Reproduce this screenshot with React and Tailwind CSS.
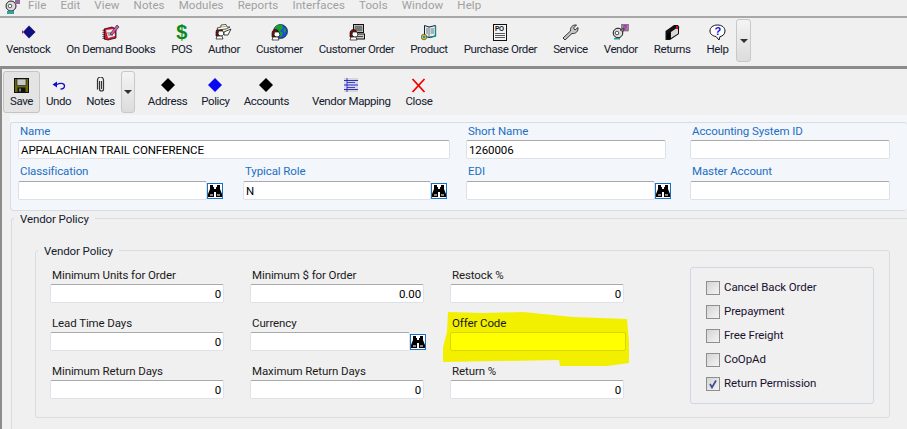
import React from "react";

const Diamond = ({ color }) => (
  <svg width="16" height="16" viewBox="0 0 16 16">
    <path d="M8 1 L15 8 L8 15 L1 8 Z" fill={color} />
  </svg>
);

// little cartoon person used by several of the old toolbar bitmaps
const Person = ({ x = 0, y = 0 }) => (
  <g transform={`translate(${x} ${y})`}>
    <path d="M1 4 A3.5 3.5 0 0 1 7 1.5 L8 6 L5 9 L1 8 Z" fill="#7a1010" stroke="#111" strokeWidth="0.7" />
    <path d="M3.5 3 L8 3 L9 6 L7 8 L5 8 L3 6 Z" fill="#fff" stroke="#111" strokeWidth="0.7" />
    <path d="M2 8 H7 L8 11 H1 Z" fill="#fff" stroke="#111" strokeWidth="0.7" />
  </g>
);

const icons = {
  venstock: (
    <svg width="16" height="16" viewBox="0 0 16 16">
      <path d="M9 1.5 L15.5 8 L9 14.5 L3 8 Z" fill="#10107e" />
      <path d="M2 6 L4 8 L2 10 Z" fill="#d81870" />
    </svg>
  ),
  books: (
    <svg width="18" height="17" viewBox="0 0 18 17">
      <path d="M2 5 L10 3 L14 5 L14 14 L6 16 L2 15 Z" fill="#e01030" stroke="#111" strokeWidth="0.8" />
      <path d="M4 6 L12 5 L13 12 L6 14 Z" fill="#f0f0f0" />
      <path d="M5 9 H10 M6 11 H11" stroke="#444" strokeWidth="0.8" />
      <path d="M8 10 L15 1 L17 3 L10 11 Z" fill="#d858b0" stroke="#111" strokeWidth="0.6" />
      <path d="M1 6 V15 M2.5 6 V15" stroke="#111" strokeWidth="0.8" strokeDasharray="1 1" />
    </svg>
  ),
  pos: <div className="h-[18px] font-['Liberation_Sans'] text-[20px] leading-[18px] font-bold text-[#0a8a1a]">$</div>,
  author: (
    <svg width="17" height="16" viewBox="0 0 17 16">
      <Person x={0} y={4} />
      <path d="M2 4 L6 3 L6 1 L11 0.5 L12 3 L15 3 L11 5 L3 6 Z" fill="#fff" stroke="#111" strokeWidth="0.7" />
      <path d="M6 3 L11.5 2.5" stroke="#c8b020" strokeWidth="1" />
      <path d="M9 8 L16 5 L13 11 L9 11 Z" fill="#fff" stroke="#111" strokeWidth="0.8" />
    </svg>
  ),
  customer: (
    <svg width="17" height="17" viewBox="0 0 17 17">
      <circle cx="9.5" cy="7.5" r="7" fill="#1850d8" stroke="#111" strokeWidth="0.7" />
      <path d="M4 3 C6 1 9 0.5 11 1 L12 4 L9 7 L12 9 L10 13 L7 11 L3.5 7 Z" fill="#18a030" />
      <path d="M13 4 L15 6 L14 9 L12.5 7 Z" fill="#18a030" />
      <Person x={0} y={5} />
    </svg>
  ),
  order: (
    <svg width="16" height="17" viewBox="0 0 16 17">
      <rect x="4.5" y="0.5" width="10" height="8" fill="#eee" stroke="#111" />
      <rect x="5.5" y="1.5" width="8" height="6" fill="#777" />
      <rect x="6" y="10" width="9.5" height="5" fill="#ccc" stroke="#111" />
      <path d="M8 12.5 H14" stroke="#444" />
      <Person x={0} y={5} />
    </svg>
  ),
  product: (
    <svg width="16" height="17" viewBox="0 0 16 17">
      <path d="M3.5 1.5 L8 3 L14.5 1.5 V12 L8 13.5 L3.5 12 Z" fill="#e8eef0" stroke="#123" />
      <path d="M8 3 V13.5 M5 5 H7 M5 7 H7 M5 9 H7 M9.5 5 H13 M9.5 7 H13 M9.5 9 H13" stroke="#345" strokeWidth="0.7" />
      <path d="M14.5 2 V12 L9 13.5" fill="none" stroke="#128a8a" strokeWidth="1.4" />
      <circle cx="3" cy="13" r="2.8" fill="#c8c030" stroke="#222" strokeWidth="0.5" />
      <path d="M2 12 H4 V14 H2 Z" fill="#2090c8" />
    </svg>
  ),
  purchase: (
    <svg width="14" height="17" viewBox="0 0 14 17">
      <rect x="0.5" y="0.5" width="13" height="16" fill="#f4f4f4" stroke="#111" />
      <text x="2" y="7" fontSize="6.5" fontWeight="700" fontFamily="Liberation Sans" fill="#111">PO</text>
      <path d="M2 9.5 H12 M2 11.5 H12 M2 13.5 H12" stroke="#333" strokeWidth="0.8" />
    </svg>
  ),
  service: (
    <svg width="17" height="17" viewBox="0 0 17 17">
      <path d="M1 14 L8.5 7 C8 3.5 10.5 0.5 14.5 1 L11.5 4 L13 6 L16 3.5 C16.5 7.5 13.5 10 10 9.5 L3 16 Z" fill="#c4c4c4" stroke="#222" strokeWidth="0.9" />
    </svg>
  ),
  vendor: (
    <svg width="17" height="16" viewBox="0 0 17 16">
      <rect x="9.5" y="0" width="7" height="7" fill="#9a7aa0" stroke="#666" strokeWidth="0.6" />
      <text x="11" y="6" fontSize="6.5" fontWeight="700" fontFamily="Liberation Sans" fill="#c000c0">?</text>
      <circle cx="6" cy="9" r="4.8" fill="#ddd" stroke="#111" />
      <circle cx="5" cy="9" r="1.8" fill="#fff" stroke="#111" strokeWidth="0.7" />
      <path d="M8 6 L12 4 L11 8 Z" fill="#888" stroke="#111" strokeWidth="0.5" />
      <path d="M2 14 H8 V15.5 H2 Z" fill="#30a0a0" />
    </svg>
  ),
  returns: (
    <svg width="15" height="16" viewBox="0 0 15 16">
      <path d="M0.5 7 L9 1 L13 1 Q15 3 14 5 L14 10 L5 16 L0.5 16 Z" fill="#111" />
      <path d="M6 8 L11 4.5 Q13 4 13 6 L13 9.5 L6 14 Z" fill="#d8d8d8" />
      <rect x="11" y="2" width="2" height="3" fill="#d01020" />
      <path d="M2 10 Q4 8 5 9 L5 15 L2 15 Z" fill="#000" />
    </svg>
  ),
  help: (
    <svg width="17" height="17" viewBox="0 0 17 17">
      <path d="M8.5 1 C13 1 16 3.5 16 7 C16 10.5 13 12.5 11 12.5 L10 16 L7 12.5 C4 12 1 10.5 1 7 C1 3.5 4 1 8.5 1 Z" fill="#fff" stroke="#111" />
      <text x="5.5" y="11" fontSize="11" fontWeight="700" fontFamily="Liberation Sans" fill="#1010e0">?</text>
    </svg>
  ),
  save: (
    <svg width="15" height="15" viewBox="0 0 15 15">
      <rect x="0.5" y="0.5" width="14" height="14" fill="#68680c" stroke="#111" />
      <rect x="3" y="1" width="9" height="6.5" fill="#c8c8c8" stroke="#111" strokeWidth="0.6" />
      <rect x="3.5" y="9.5" width="8" height="5" fill="#111" />
      <rect x="5" y="10.5" width="2" height="3" fill="#777" />
    </svg>
  ),
  undo: (
    <svg width="14" height="9" viewBox="0 0 14 9">
      <path d="M0.5 3.5 L5 0.5 L5 6.5 Z" fill="#1010c8" />
      <path d="M5 3.5 C8 1.5 12.5 2 12.5 5 C12.5 7 10.5 8 8.5 8" fill="none" stroke="#1010c8" strokeWidth="1.3" />
    </svg>
  ),
  notes: (
    <svg width="10" height="16" viewBox="0 0 10 16">
      <path d="M3.5 4 V12 A2 2 0 0 0 7.5 12 V3 A2.5 2.5 0 0 0 1.5 3 V12.5 M5.5 4 V12" fill="none" stroke="#333" strokeWidth="1.2" />
    </svg>
  ),
  mapping: (
    <svg width="16" height="16" viewBox="0 0 16 16">
      <rect x="1" y="1" width="14" height="14" fill="#d8d8d8" />
      <path d="M1 3.5 H15 M1 8 H15 M1 12.5 H15" stroke="#1a1ad0" strokeWidth="0.9" />
      <path d="M4 1 V15 M4 5.5 H12 M4 10.5 H12" stroke="#1a1ad0" strokeWidth="0.8" />
    </svg>
  ),
  close: (
    <svg width="15" height="15" viewBox="0 0 15 15">
      <path d="M1.5 1 L13.5 14 M13.5 1 L1.5 14" stroke="#f00000" strokeWidth="1.8" />
    </svg>
  ),
};

function ToolButton({ icon, label, tight, className = "" }) {
  return (
    <div className={"flex flex-col items-center whitespace-nowrap tracking-[-0.4px] " + className}>
      <div className="flex h-[18px] items-center justify-center">{icon}</div>
      <div className={tight ? "leading-[14px]" : "leading-[17px]"}>{label}</div>
    </div>
  );
}

function Caret({ className = "" }) {
  return (
    <div className={"flex items-center justify-center rounded-[3px] border border-[#c8c8c8] bg-gradient-to-b from-[#f4f4f4] to-[#dcdcdc] " + className}>
      <div className="h-0 w-0 border-x-[4px] border-t-[4px] border-x-transparent border-t-[#333]" />
    </div>
  );
}

function Binoculars() {
  return (
    <div className="flex h-[16px] w-[16px] shrink-0 items-center justify-center border border-[#1c6fc4] bg-white">
      <svg width="14" height="13" viewBox="0 0 14 13">
        <path d="M2 1 H5 V3 H6 V5 H8 V3 H9 V1 H12 V5 L14 10 V13 H8 V8 H6 V13 H0 V10 L2 5 Z" fill="#000" />
        <path d="M2 10 H5 V12 H2 Z M9 10 H12 V12 H9 Z" fill="#888" />
      </svg>
    </div>
  );
}

function Box({ value, right, className = "" }) {
  return (
    <div
      className={
        "h-[19px] truncate rounded-[2px] border border-[#dde2e8] border-t-[#a9a9a9] bg-white px-[2px] leading-[18px] text-black " +
        (right ? "text-right " : "") +
        className
      }
    >
      {value || "\u00a0"}
    </div>
  );
}

function HeadField({ label, value, search, tall, className = "" }) {
  return (
    <div className={className}>
      <div className={"ml-[2px] leading-[18px] text-[#1c6fc4] " + (tall ? "h-[19px]" : "h-[18px]")}>{label}</div>
      <div className="flex items-center">
        <Box value={value} className="min-w-0 flex-1" />
        {search && <Binoculars />}
      </div>
    </div>
  );
}

function PolicyField({ label, value, search, className = "" }) {
  return (
    <div className={className}>
      <div className="ml-[2px] h-[18px] leading-[18px] text-[#1a1a1a]">{label}</div>
      <div className="flex items-center">
        <Box value={value} right className="min-w-0 flex-1" />
        {search && <Binoculars />}
      </div>
    </div>
  );
}

function Check({ label, checked }) {
  return (
    <div className="flex h-[24px] items-center gap-[4px] text-[#1a1030]">
      <div className="flex h-[14px] w-[14px] items-center justify-center border border-[#8e8e8e] bg-gradient-to-br from-[#d4d4d4] to-[#f4f4f4]">
        {checked && (
          <svg width="10" height="10" viewBox="0 0 10 10">
            <path d="M2 5 L4 8.5 L8 1.5" fill="none" stroke="#3a4f8f" strokeWidth="1.7" />
          </svg>
        )}
      </div>
      {label}
    </div>
  );
}

const menus = ["File", "Edit", "View", "Notes", "Modules", "Reports", "Interfaces", "Tools", "Window", "Help"];

const topTools = [
  ["venstock", "Venstock"],
  ["books", "On Demand Books"],
  ["pos", "POS"],
  ["author", "Author"],
  ["customer", "Customer"],
  ["order", "Customer Order"],
  ["product", "Product"],
  ["purchase", "Purchase Order"],
  ["service", "Service"],
  ["vendor", "Vendor"],
  ["returns", "Returns"],
  ["help", "Help"],
];

export default function App() {
  return (
    <div className="relative h-[429px] w-[907px] overflow-hidden bg-[#f0f0f0] font-['Roboto',sans-serif] text-[11.5px] tracking-[-0.1px] text-[#14202e]">
      {/* menu bar, cropped at the top edge */}
      <div className="flex h-[18px] items-end gap-[14px] border-b-2 border-[#a8a8a8] pb-[3px] pl-[28px] text-[11.5px] leading-[15px] tracking-[0.1px] text-[#a0a0a0]">
        <svg className="absolute left-[4px] top-0" width="17" height="14" viewBox="0 0 17 14">
          <circle cx="7" cy="6" r="5" fill="#ddd" stroke="#222" />
          <circle cx="6" cy="6" r="1.8" fill="#fff" stroke="#222" strokeWidth="0.7" />
          <rect x="11" y="0" width="5" height="4" fill="#906a9a" />
          <path d="M3 11 H10 V14 H3 Z" fill="#30a0a0" />
        </svg>
        {menus.map((m) => (
          <span key={m}>{m}</span>
        ))}
      </div>

      {/* main toolbar */}
      <div className="flex h-[51px] items-start gap-[16px] border-b-[3px] border-[#8c8c8c] pl-[6px] pt-[5px]">
        {topTools.map(([key, label]) => (
          <ToolButton key={key} icon={icons[key]} label={label} />
        ))}
        <Caret className="-ml-[8px] -mt-[4px] h-[43px] w-[15px]" />
      </div>

      {/* form toolbar */}
      <div className="flex h-[46px] items-start pl-[3px] pt-[2px]">
        <ToolButton
          tight
          icon={icons.save}
          label="Save"
          className="h-[42px] w-[37px] rounded-[3px] border border-[#c4c4c4] bg-[#e4e4e4] pt-[4px]"
        />
        <ToolButton tight icon={icons.undo} label="Undo" className="ml-[6px] mt-[5px]" />
        <ToolButton tight icon={icons.notes} label="Notes" className="ml-[15px] mt-[5px]" />
        <Caret className="ml-[6px] h-[42px] w-[14px]" />
        <ToolButton tight icon={<Diamond color="#000" />} label="Address" className="ml-[13px] mt-[5px]" />
        <ToolButton tight icon={<Diamond color="#0808f0" />} label="Policy" className="ml-[14px] mt-[5px]" />
        <ToolButton tight icon={<Diamond color="#000" />} label="Accounts" className="ml-[14px] mt-[5px]" />
        <ToolButton tight icon={icons.mapping} label="Vendor Mapping" className="ml-[23px] mt-[5px]" />
        <ToolButton tight icon={icons.close} label="Close" className="ml-[15px] mt-[5px]" />
      </div>

      {/* page frame */}
      <div className="absolute bottom-0 left-0 top-[69px] w-[2px] bg-[#8c8c8c]" />

      {/* vendor header panel */}
      <div className="ml-[10px] bg-[#f4f6fa] pt-[7px]">
        <div className="h-[89px] rounded-[3px] border-y border-l border-[#d8dde4] bg-[#f3f6fb] pl-[7px]">
          <div className="-mt-[1px] grid grid-cols-[448px_224px_200px]">
            <HeadField label="Name" value="APPALACHIAN TRAIL CONFERENCE" className="w-[432px]" />
            <HeadField label="Short Name" value="1260006" className="w-[200px]" />
            <HeadField label="Accounting System ID" />
          </div>
          <div className="mt-[3px] grid grid-cols-[225px_223px_224px_200px]">
            <HeadField tall label="Classification" search className="w-[205px]" />
            <HeadField tall label="Typical Role" value="N" search className="w-[204px]" />
            <HeadField tall label="EDI" search className="w-[205px]" />
            <HeadField tall label="Master Account" />
          </div>
        </div>
      </div>

      {/* outer group */}
      <div className="relative ml-[11px] mt-[7px] h-[260px] rounded-tl-[3px] border-l border-t border-[#d8dde4] pl-[23px] pt-[31px]">
        <div className="absolute -top-[8px] left-[2px] bg-[#f0f0f0] px-[6px] leading-[16px]">Vendor Policy</div>

        {/* inner group */}
        <div className="relative h-[168px] w-[855px] rounded-[3px] border border-[#d8dde4] pl-[14px] pt-[15px]">
          <div className="absolute -top-[8px] left-[2px] bg-[#f0f0f0] px-[6px] leading-[16px]">Vendor Policy</div>
          <div className="grid grid-cols-[174px_174px_174px] gap-x-[26px] gap-y-[11px]">
            <PolicyField label="Minimum Units for Order" value="0" />
            <PolicyField label="Minimum $ for Order" value="0.00" />
            <PolicyField label="Restock %" value="0" />
            <PolicyField label="Lead Time Days" value="0" />
            <PolicyField label="Currency" search className="w-[176px]" />
            <div className="relative">
              {/* marker highlight over the offer code field */}
              <svg className="absolute -left-[7px] -top-[2px]" width="186" height="55" viewBox="0 0 186 55">
                <path d="M5 0 L40 1 L80 0 L130 5 L184 7 L186 30 L186 51 L164 54 L117 54 L116 48 L0 50 L0 35 L4 20 Z" fill="#f2f000" />
              </svg>
              <div className="relative">
                <div className="ml-[2px] h-[18px] leading-[18px] text-[#1a1a1a]">Offer Code</div>
                <div className="h-[19px] w-[176px] rounded-[2px] border border-[#d8d800] bg-[#ffff00]" />
              </div>
            </div>
            <PolicyField label="Minimum Return Days" value="0" />
            <PolicyField label="Maximum Return Days" value="0" />
            <PolicyField label="Return %" value="0" />
          </div>

          {/* option checkboxes */}
          <div className="absolute left-[654px] top-[16px] h-[137px] w-[184px] rounded-[3px] border border-[#d0d8e4] pl-[15px] pt-[8px]">
            <Check label="Cancel Back Order" />
            <Check label="Prepayment" />
            <Check label="Free Freight" />
            <Check label="CoOpAd" />
            <Check label="Return Permission" checked />
          </div>
        </div>
      </div>
    </div>
  );
}
